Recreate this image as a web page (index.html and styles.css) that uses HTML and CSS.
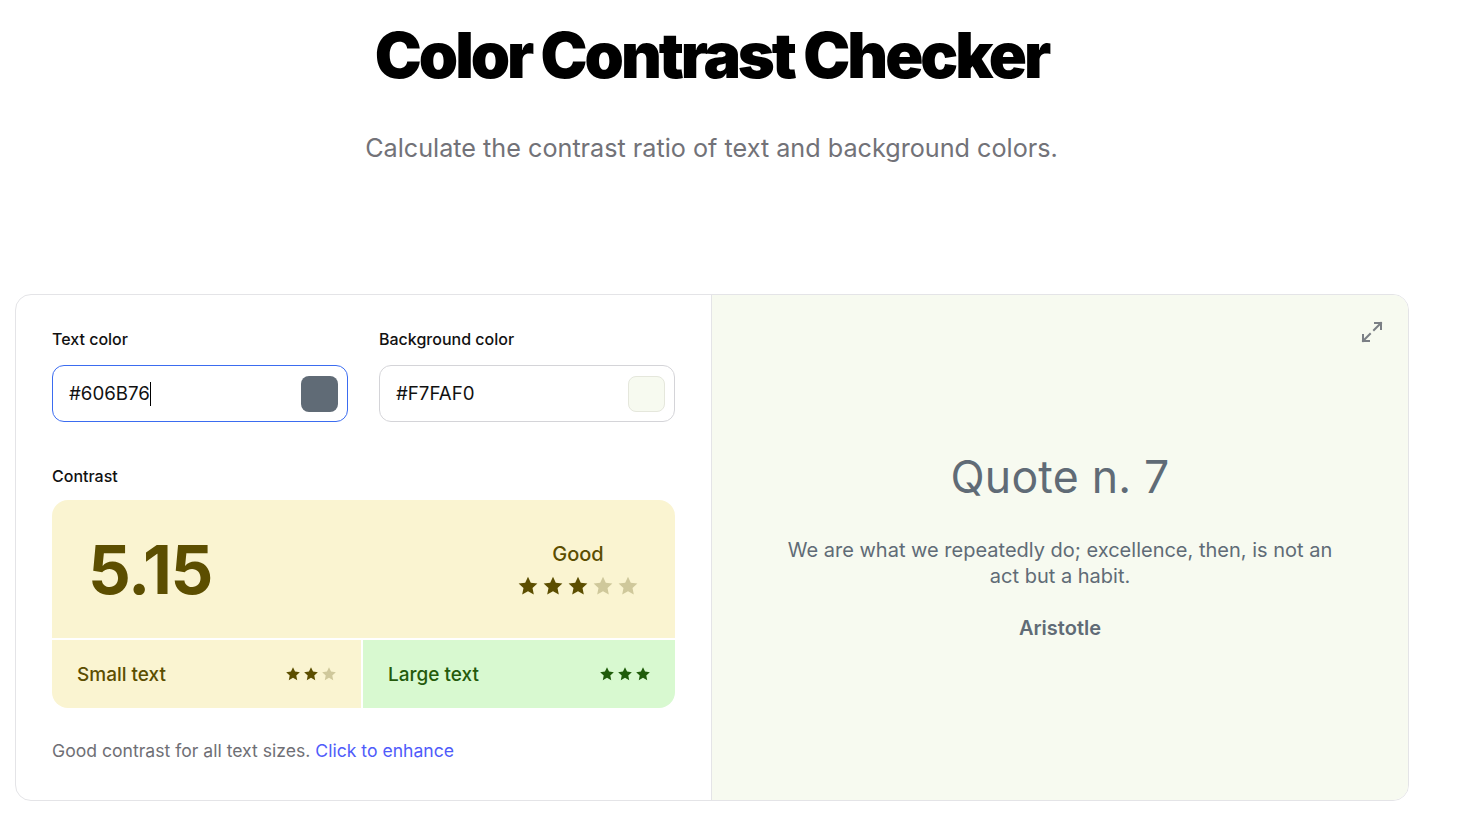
FILE: index.html
```html
<!DOCTYPE html>
<html lang="en">
<head>
<meta charset="utf-8">
<title>Color Contrast Checker</title>
<link rel="stylesheet" href="styles.css">
</head>
<body>
<div class="page">
<header class="hero">
  <h1 class="title">Color Contrast Checker</h1>
  <p class="subtitle">Calculate the contrast ratio of text and background colors.</p>
</header>
<main class="card">
  <section class="controls">
    <div class="fields">
      <div class="field">
        <label class="label">Text color</label>
        <div class="input focused">
          <span class="value">#606B76<span class="caret"></span></span>
          <span class="swatch swatch-text"></span>
        </div>
      </div>
      <div class="field">
        <label class="label">Background color</label>
        <div class="input">
          <span class="value">#F7FAF0</span>
          <span class="swatch swatch-bg"></span>
        </div>
      </div>
    </div>
    <div class="label contrast-label">Contrast</div>
    <div class="contrast">
      <div class="score">
        <div class="ratio">5.15</div>
        <div class="rating">
          <div class="rating-text">Good</div>
          <div class="stars big">
            <svg viewBox="0 0 24 24" class="on"><path d="M12 1.8l3.05 6.6 7.2.85-5.33 4.93 1.42 7.12L12 17.7l-6.34 3.6 1.42-7.12L1.75 9.25l7.2-.85z"/></svg>
            <svg viewBox="0 0 24 24" class="on"><path d="M12 1.8l3.05 6.6 7.2.85-5.33 4.93 1.42 7.12L12 17.7l-6.34 3.6 1.42-7.12L1.75 9.25l7.2-.85z"/></svg>
            <svg viewBox="0 0 24 24" class="on"><path d="M12 1.8l3.05 6.6 7.2.85-5.33 4.93 1.42 7.12L12 17.7l-6.34 3.6 1.42-7.12L1.75 9.25l7.2-.85z"/></svg>
            <svg viewBox="0 0 24 24" class="off"><path d="M12 1.8l3.05 6.6 7.2.85-5.33 4.93 1.42 7.12L12 17.7l-6.34 3.6 1.42-7.12L1.75 9.25l7.2-.85z"/></svg>
            <svg viewBox="0 0 24 24" class="off"><path d="M12 1.8l3.05 6.6 7.2.85-5.33 4.93 1.42 7.12L12 17.7l-6.34 3.6 1.42-7.12L1.75 9.25l7.2-.85z"/></svg>
          </div>
        </div>
      </div>
      <div class="sizes">
        <div class="size small">
          <span>Small text</span>
          <div class="stars tiny">
            <svg viewBox="0 0 24 24" class="on"><path d="M12 1.8l3.05 6.6 7.2.85-5.33 4.93 1.42 7.12L12 17.7l-6.34 3.6 1.42-7.12L1.75 9.25l7.2-.85z"/></svg>
            <svg viewBox="0 0 24 24" class="on"><path d="M12 1.8l3.05 6.6 7.2.85-5.33 4.93 1.42 7.12L12 17.7l-6.34 3.6 1.42-7.12L1.75 9.25l7.2-.85z"/></svg>
            <svg viewBox="0 0 24 24" class="off"><path d="M12 1.8l3.05 6.6 7.2.85-5.33 4.93 1.42 7.12L12 17.7l-6.34 3.6 1.42-7.12L1.75 9.25l7.2-.85z"/></svg>
          </div>
        </div>
        <div class="size large">
          <span>Large text</span>
          <div class="stars tiny">
            <svg viewBox="0 0 24 24" class="on"><path d="M12 1.8l3.05 6.6 7.2.85-5.33 4.93 1.42 7.12L12 17.7l-6.34 3.6 1.42-7.12L1.75 9.25l7.2-.85z"/></svg>
            <svg viewBox="0 0 24 24" class="on"><path d="M12 1.8l3.05 6.6 7.2.85-5.33 4.93 1.42 7.12L12 17.7l-6.34 3.6 1.42-7.12L1.75 9.25l7.2-.85z"/></svg>
            <svg viewBox="0 0 24 24" class="on"><path d="M12 1.8l3.05 6.6 7.2.85-5.33 4.93 1.42 7.12L12 17.7l-6.34 3.6 1.42-7.12L1.75 9.25l7.2-.85z"/></svg>
          </div>
        </div>
      </div>
    </div>
    <p class="note">Good contrast for all text sizes. <a href="#" class="link">Click to enhance</a></p>
  </section>
  <section class="preview">
    <button class="expand" aria-label="Expand">
      <svg viewBox="0 0 24 24" fill="none" stroke="currentColor" stroke-width="2" stroke-linecap="square"><path d="M15 3h6v6M21 3l-7 7M9 21H3v-6M3 21l7-7"/></svg>
    </button>
    <div class="quote">
      <h2 class="quote-title">Quote n. 7</h2>
      <p class="quote-text">We are what we repeatedly do; excellence, then, is not an act but a habit.</p>
      <p class="quote-author">Aristotle</p>
    </div>
  </section>
</main>
</div>
</body>
</html>
```

FILE: styles.css
```css
* { box-sizing: border-box; }
html, body { margin: 0; padding: 0; background: #fff; }
body { font-family: Inter, "Noto Sans", sans-serif; color: #111; }

.page { width: 1423px; }
.hero { text-align: center; padding-top: 20px; }
.title {
  margin: 0;
  font-size: 63px;
  line-height: 70px;
  font-weight: 900;
  letter-spacing: -3.1px;
  color: #000;
}
.subtitle {
  margin: 42px 0 0;
  font-size: 25.2px;
  line-height: 32px;
  color: #727278;
  font-weight: 400;
}

.card {
  margin: 130px 0 0 15px;
  width: 1394px;
  height: 507px;
  border: 1px solid #e4e4e7;
  border-radius: 16px;
  display: grid;
  grid-template-columns: 696px 1fr;
  overflow: hidden;
}

.controls { padding: 30px 36px 0 36px; border-right: 1px solid #e4e4e7; }
.fields { display: grid; grid-template-columns: 1fr 1fr; gap: 31px; }
.label { display: block; font-size: 16px; line-height: 28px; font-weight: 500; color: #111; }
.input {
  margin-top: 12px;
  height: 57px;
  border: 1px solid #d4d4d8;
  border-radius: 12px;
  display: flex;
  align-items: center;
  justify-content: space-between;
  padding: 0 9px 0 16px;
  background: #fff;
}
.input.focused { border-color: #3b6cf0; }
.value { font-size: 18.7px; color: #111; display: inline-flex; align-items: center; }
.caret { display: inline-block; width: 1px; height: 24px; background: #000; }
.swatch { width: 37px; height: 36px; border-radius: 8px; }
.swatch-text { background: #606B76; }
.swatch-bg { background: #F7FAF0; border: 1px solid #e5e7dc; }

.contrast-label { margin-top: 40px; }
.contrast { margin-top: 10px; }
.score {
  height: 138px;
  background: #FAF4D1;
  border-radius: 16px 16px 0 0;
  display: flex;
  align-items: center;
  justify-content: space-between;
  padding: 0 36px 0 36px;
}
.ratio { font-size: 67px; font-weight: 700; color: #5C4E00; letter-spacing: -1.3px; line-height: 1; margin-top: 0; }
.rating { display: flex; flex-direction: column; align-items: center; margin-top: -2px; }
.rating-text { font-size: 20px; font-weight: 500; color: #5C4E00; line-height: 28px; }
.stars { display: flex; }
.stars svg { display: block; }
.stars.big { gap: 3px; margin-top: 7px; }
.stars.big svg { width: 22px; height: 22px; }
.stars.tiny { gap: 2px; }
.stars.tiny svg { width: 16px; height: 16px; }
.stars .on { fill: #5C4E00; }
.stars .off { fill: #CFC89B; }

.sizes { display: grid; grid-template-columns: 309px 1fr; gap: 2px; margin-top: 2px; }
.size {
  height: 68px;
  display: flex;
  align-items: center;
  justify-content: space-between;
  font-size: 19px;
  font-weight: 500;
}
.size.small { background: #FAF4D1; color: #5C4E00; padding: 0 24px 0 25px; border-radius: 0 0 0 16px; }
.size.large { background: #D8F9D0; color: #245A0B; padding: 0 24px 0 25px; border-radius: 0 0 16px 0; }
.size.large .stars .on { fill: #1F5C0A; }

.note { margin: 31px 0 0; font-size: 17.6px; line-height: 24px; color: #6f6f75; }
.link { color: #4F5BFA; text-decoration: none; }

.preview {
  background: #F7FAF0;
  display: flex;
  align-items: center;
  justify-content: center;
}
.expand {
  position: absolute;
  margin: 0;
  padding: 0;
  border: 0;
  background: none;
  color: #7b7f85;
  width: 24px;
  height: 24px;
  transform: translate(312px, -216px);
}
.expand svg { width: 24px; height: 24px; display: block; }
.quote { text-align: center; color: #606B76; width: 560px; margin-top: -6px; }
.quote-title { margin: 0; font-size: 44.6px; font-weight: 400; line-height: 56px; letter-spacing: 0.2px; }
.quote-text { margin: 32px 0 0; font-size: 20px; line-height: 26px; }
.quote-author { margin: 26px 0 0; font-size: 20px; font-weight: 600; line-height: 26px; }
```
